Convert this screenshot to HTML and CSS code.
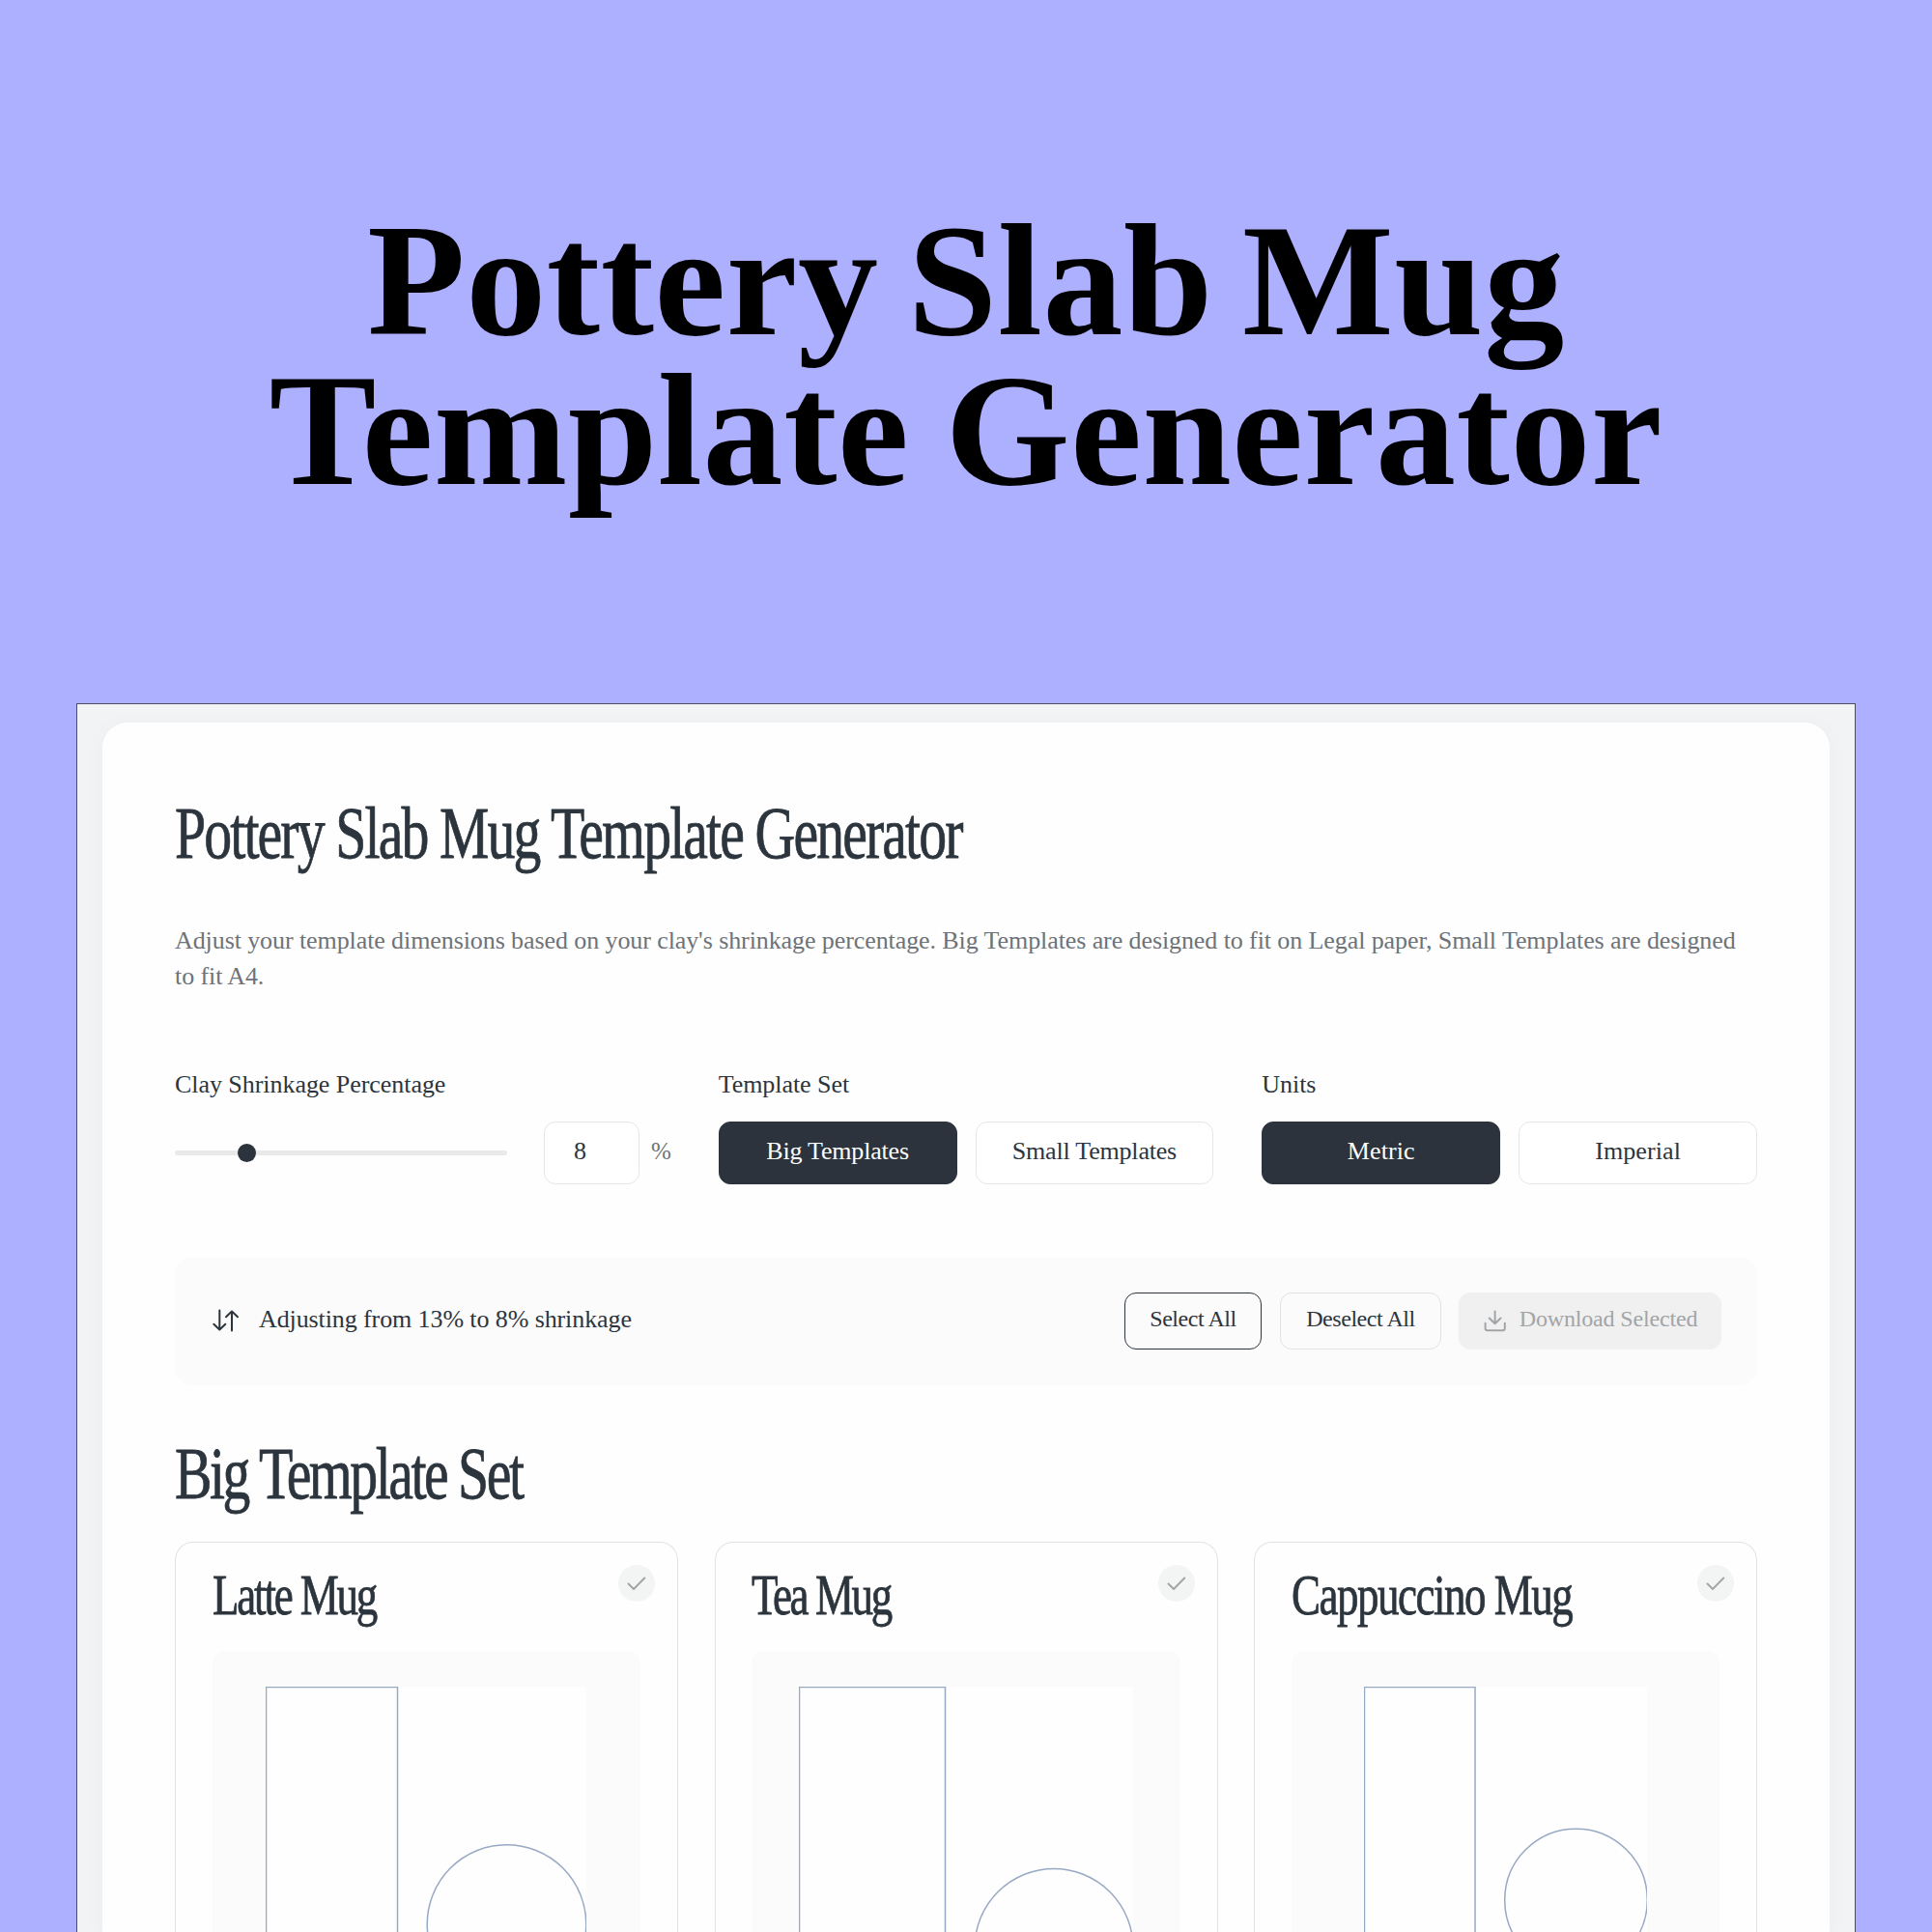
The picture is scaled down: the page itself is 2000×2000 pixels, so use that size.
FILE: index.html
```
<!DOCTYPE html>
<html lang="en">
<head>
    <meta charset="UTF-8">
    <meta name="viewport" content="width=device-width, initial-scale=1.0">
    <title>Pottery Slab Mug Template Generator</title>
    <link rel="stylesheet" href="styles.css">
</head>
<body>
    <header class="hero">
        <div class="hero-title">
            <span class="line-1">Pottery Slab Mug</span>
            <span class="line-2">Template Generator</span>
        </div>
    </header>

    <div class="frame">
        <main class="page">
            <h1><span class="narrow">Pottery Slab Mug Template Generator</span></h1>
            <p class="intro">Adjust your template dimensions based on your clay's shrinkage percentage. Big Templates are designed to fit on Legal paper, Small Templates are designed<br>to fit A4.</p>

            <div class="controls">
                <div class="control">
                    <div class="label">Clay Shrinkage Percentage</div>
                    <div class="slider-row">
                        <div class="slider"><div class="thumb"></div></div>
                        <div class="number">8</div>
                        <span class="percent">%</span>
                    </div>
                </div>
                <div class="control">
                    <div class="label">Template Set</div>
                    <div class="toggle">
                        <button class="btn active">Big Templates</button>
                        <button class="btn">Small Templates</button>
                    </div>
                </div>
                <div class="control">
                    <div class="label">Units</div>
                    <div class="toggle">
                        <button class="btn active wide">Metric</button>
                        <button class="btn wide">Imperial</button>
                    </div>
                </div>
            </div>

            <div class="status-bar">
                <svg class="icon-sort" width="30" height="30" viewBox="0 0 30 30">
                    <path d="M8.3 4.5v20M2.3 18.7l6 5.8 6-5.8M21 25.5v-20M15 11.3l6-5.8 6 5.8"/>
                </svg>
                <span class="status-text">Adjusting from 13% to 8% shrinkage</span>
                <button class="btn-small select">Select All</button>
                <button class="btn-small deselect">Deselect All</button>
                <button class="btn-small download" disabled>
                    <svg class="icon-download" width="26" height="26" viewBox="0 0 26 26">
                        <path d="M12.6 2.5v12.8M6.7 9.5l5.9 5.8 5.9-5.8M2.6 14.8v5.2q0 2.3 2.3 2.3h15.6q2.3 0 2.3-2.3v-5.2"/>
                    </svg>
                    <span>Download Selected</span>
                </button>
            </div>

            <h2><span class="narrow">Big Template Set</span></h2>

            <div class="cards">
                <div class="card">
                    <h3><span class="narrow">Latte Mug</span></h3>
                    <div class="check"><svg width="22" height="18" viewBox="0 0 22 18"><path d="M2.5 9.5l5.5 5.5L19.3 3.5"/></svg></div>
                    <div class="preview">
                        <svg class="sheet" width="332" height="256" viewBox="0 0 332 256">
                            <rect x="0.5" y="0.5" width="136" height="600"/>
                            <circle cx="249.5" cy="246" r="82.3"/>
                        </svg>
                    </div>
                </div>
                <div class="card tea">
                    <h3><span class="narrow">Tea Mug</span></h3>
                    <div class="check"><svg width="22" height="18" viewBox="0 0 22 18"><path d="M2.5 9.5l5.5 5.5L19.3 3.5"/></svg></div>
                    <div class="preview">
                        <svg class="sheet" width="346" height="256" viewBox="0 0 346 256">
                            <rect x="0.5" y="0.5" width="151" height="600"/>
                            <circle cx="264" cy="270.5" r="82"/>
                        </svg>
                    </div>
                </div>
                <div class="card cappuccino">
                    <h3><span class="narrow">Cappuccino Mug</span></h3>
                    <div class="check"><svg width="22" height="18" viewBox="0 0 22 18"><path d="M2.5 9.5l5.5 5.5L19.3 3.5"/></svg></div>
                    <div class="preview">
                        <svg class="sheet" width="293" height="256" viewBox="0 0 293 256">
                            <rect x="0.5" y="0.5" width="114.5" height="600"/>
                            <circle cx="219.5" cy="221" r="73.8"/>
                        </svg>
                    </div>
                </div>
            </div>
        </main>
    </div>
</body>
</html>
```
FILE: styles.css
```
* {
    box-sizing: border-box;
    margin: 0;
    padding: 0;
}

body {
    height: 2000px;
    overflow: hidden;
    background-color: #adafff;
    color: #2c353d;
    font-family: "Liberation Serif", serif;
    font-size: 26px;
}

.hero {
    height: 728px;
    padding-top: 213px;
}

.hero-title {
    color: #000;
    font-size: 166px;
    font-weight: bold;
    line-height: 155px;
    text-align: center;
}

.hero-title span {
    display: block;
    white-space: nowrap;
}

.line-1 {
    letter-spacing: 0.6px;
    word-spacing: -12px;
}

.line-2 {
    letter-spacing: 0.6px;
    word-spacing: -5px;
}

.frame {
    margin: 0 79px;
    padding: 19px 26px 0;
    height: 1272px;
    overflow: hidden;
    background-color: #f2f3f5;
    border: 1px solid #4c4c66;
    border-bottom: none;
}

.page {
    height: 1252px;
    padding: 68px 75px 0;
    background-color: #fefefe;
    border-radius: 26px 26px 0 0;
    box-shadow: 0 4px 24px rgba(0, 0, 0, 0.03);
}

h1, h2, h3 {
    font-weight: normal;
    white-space: nowrap;
}

/* condensed headings */
.narrow {
    display: inline-block;
    transform: scaleX(0.75);
    transform-origin: left center;
    -webkit-text-stroke: 0.8px currentColor;
}

h1 {
    font-size: 77px;
    line-height: 92px;
    letter-spacing: -2.5px;
}

h2 {
    margin-top: 45px;
    font-size: 77px;
    line-height: 92px;
    letter-spacing: -3.3px;
}

.intro {
    margin-top: 47px;
    color: #6d7378;
    line-height: 37.3px;
    letter-spacing: -0.09px;
    white-space: nowrap;
}

.controls {
    display: grid;
    grid-template-columns: repeat(3, minmax(0, 1fr));
    gap: 50px;
    margin-top: 77px;
}

.label {
    margin-bottom: 22px;
    line-height: 32px;
    letter-spacing: -0.05px;
}

.slider-row {
    display: flex;
    align-items: center;
}

.slider {
    flex: none;
    width: 344px;
    height: 5px;
    background-color: #e9e9e9;
    border-radius: 3px;
}

.thumb {
    width: 19px;
    height: 19px;
    margin: -7px 0 0 65px;
    background-color: #2c333c;
    border-radius: 50%;
}

.number {
    flex: none;
    width: 99px;
    height: 65px;
    margin-left: 38px;
    padding-left: 30px;
    line-height: 60px;
    background-color: #fff;
    border: 1px solid #e6e6e6;
    border-radius: 12px;
}

.percent {
    margin-left: 12px;
    padding-bottom: 2px;
    font-size: 25px;
    color: #6d7378;
}

.toggle {
    display: flex;
    gap: 19px;
}

.btn {
    flex: 1;
    height: 65px;
    padding-bottom: 2px;
    font: inherit;
    letter-spacing: -0.2px;
    color: inherit;
    background-color: #fff;
    border: 1px solid #e6e6e6;
    border-radius: 12px;
}

.btn.wide {
    letter-spacing: 0.1px;
}

.btn.active {
    color: #fff;
    background-color: #2c333c;
    border-color: #2c333c;
}

.status-bar {
    display: flex;
    align-items: center;
    height: 133px;
    margin-top: 75px;
    padding: 0 37px 0 38px;
    background-color: #fbfbfb;
    border-radius: 19px;
}

.icon-sort, .icon-download, .check svg {
    fill: none;
    stroke: currentColor;
    stroke-width: 2;
    stroke-linecap: round;
    stroke-linejoin: round;
}

.status-text {
    flex: 1;
    margin-left: 19px;
    padding-bottom: 2px;
    letter-spacing: -0.1px;
}

.btn-small {
    display: flex;
    align-items: center;
    justify-content: center;
    height: 59px;
    margin-left: 19px;
    padding-bottom: 3px;
    font: inherit;
    font-size: 24px;
    letter-spacing: -0.45px;
    color: inherit;
    background-color: #fbfbfb;
    border: 1px solid #e2e2e2;
    border-radius: 12px;
}

.select {
    width: 142px;
    border-color: #2c353d;
}

.deselect {
    width: 167px;
}

.download {
    width: 272px;
    gap: 12px;
    margin-left: 18px;
    letter-spacing: -0.16px;
    color: #a2a5a8;
    background-color: #f0f0f0;
    border-color: #f0f0f0;
}

.icon-download {
    margin-top: 4px;
}

.cards {
    display: grid;
    grid-template-columns: repeat(3, minmax(0, 1fr));
    gap: 37.5px;
    margin-top: 25px;
}

.card {
    position: relative;
    height: 404px;
    padding: 18px 38px 0 37.5px;
    border: 1px solid #e2e2e2;
    border-bottom: none;
    border-radius: 19px 19px 0 0;
}

h3 {
    font-size: 60px;
    line-height: 72px;
    letter-spacing: -2.9px;
}

.tea h3 {
    letter-spacing: -3.2px;
}

.cappuccino h3 {
    letter-spacing: -2px;
}

.check {
    position: absolute;
    top: 23px;
    right: 23px;
    display: flex;
    align-items: center;
    justify-content: center;
    width: 38px;
    height: 38px;
    color: #a3a6a8;
    background-color: #f3f5f5;
    border-radius: 50%;
}

.preview {
    display: flex;
    justify-content: center;
    height: 292px;
    margin-top: 22px;
    padding-top: 37px;
    background-color: #fbfbfb;
    border-radius: 12px 12px 0 0;
}

.sheet {
    background-color: #fefefe;
    fill: none;
    stroke: #98a9c4;
    stroke-width: 1.5;
}
```
